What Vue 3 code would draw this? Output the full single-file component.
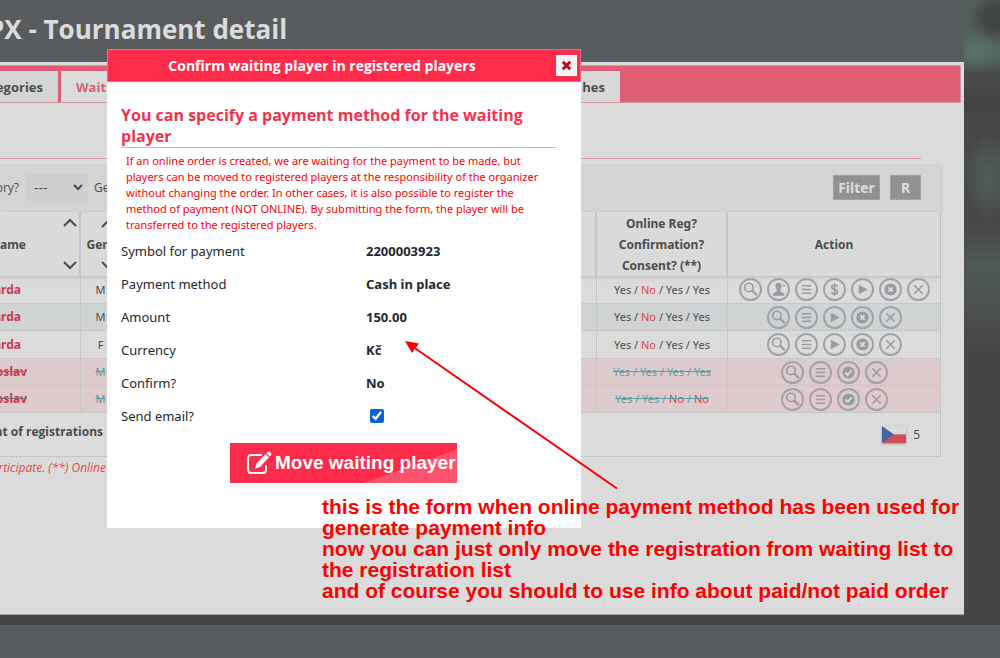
<script setup>
import { ref } from 'vue'

const sendEmail = ref(true)
const category = ref('---')

const full = ['search', 'person', 'list', 'dollar', 'play', 'cancel', 'close']
const short = ['search', 'list', 'play', 'cancel', 'close']
const waiting = ['search', 'list', 'check', 'close']

const rows = [
  { name: 'arda', gender: 'M', flags: ['Yes', 'No', 'Yes', 'Yes'], actions: full, kind: '' },
  { name: 'arda', gender: 'M', flags: ['Yes', 'No', 'Yes', 'Yes'], actions: short, kind: 'alt' },
  { name: 'arda', gender: 'F', flags: ['Yes', 'No', 'Yes', 'Yes'], actions: short, kind: '' },
  { name: 'oslav', gender: 'M', flags: ['Yes', 'Yes', 'Yes', 'Yes'], actions: waiting, kind: 'cancelled' },
  { name: 'oslav', gender: 'M', flags: ['Yes', 'Yes', 'No', 'No'], actions: waiting, kind: 'cancelled' },
]

const details = [
  ['Symbol for payment', '2200003923'],
  ['Payment method', 'Cash in place'],
  ['Amount', '150.00'],
  ['Currency', 'Kč'],
  ['Confirm?', 'No'],
]
</script>

<template>
  <div class="page">
    <header class="masthead"><h1>PX - Tournament detail</h1></header>

    <main class="panel">
      <nav class="tabs">
        <a class="tab first" href="#categories">egories</a>
        <a class="tab active" href="#waiting">Waiting</a>
        <a class="tab last" href="#matches">hes</a>
      </nav>

      <div class="content">
        <div class="rule"></div>
        <form class="filter" @submit.prevent>
          <label for="category">ory?</label>
          <span class="select">
            <select id="category" v-model="category"><option>---</option></select>
            <svg viewBox="0 0 10 7"><path d="M1 1l4 4 4-4" /></svg>
          </span>
          <span class="gender-label">Ge</span>
          <button class="filter-btn" type="submit">Filter</button>
          <button class="filter-btn reset" type="reset">R</button>
        </form>

        <table class="players">
          <colgroup>
            <col class="c-name"><col class="c-gender"><col><col class="c-online"><col class="c-action">
          </colgroup>
          <thead>
            <tr>
              <th class="name">
                <div class="sortable">
                  <span>ame</span>
                  <span class="sorts">
                    <svg viewBox="0 0 14 9"><path d="M1 8l6-6 6 6" /></svg>
                    <svg viewBox="0 0 14 9"><path d="M1 1l6 6 6-6" /></svg>
                  </span>
                </div>
              </th>
              <th class="gender">
                <div class="sortable">
                  <svg viewBox="0 0 14 9"><path d="M1 8l6-6 6 6" /></svg>
                  <span>Gen.</span>
                  <svg viewBox="0 0 14 9"><path d="M1 1l6 6 6-6" /></svg>
                </div>
              </th>
              <th></th>
              <th>Online Reg?<br>Confirmation?<br>Consent? (**)</th>
              <th>Action</th>
            </tr>
          </thead>
          <tbody>
            <tr v-for="(row, i) in rows" :key="i" :class="row.kind">
              <td class="name"><a href="#player">{{ row.name }}</a></td>
              <td class="gender"><span>{{ row.gender }}</span></td>
              <td></td>
              <td class="online">
                <span class="flags"><template v-for="(f, j) in row.flags" :key="j"><template v-if="j"> / </template><span :class="{ no: f === 'No' }">{{ f }}</span></template></span>
              </td>
              <td>
                <div class="actions">
                  <button v-for="a in row.actions" :key="a" class="round" type="button" :aria-label="a">
                    <svg viewBox="3 3 18 18">
                      <template v-if="a === 'search'">
                        <circle class="line" cx="10.5" cy="10" r="4" />
                        <path class="line thick" d="M13.5 13l4.500 4.500" />
                      </template>
                      <template v-else-if="a === 'person'">
                        <path class="solid" d="M12 5.500c2 0 3.200 1.400 3 3.300-.1 1.700-.9 2.500-1.300 3.200v2c1 .7 3.800 1 3.800 4H6.500c0-3 2.800-3.300 3.800-4v-2C9.900 11.300 9.100 10.500 9 8.800 8.800 6.900 10 5.500 12 5.500z" />
                        <circle class="solid" cx="17.200" cy="8.500" r="1" />
                      </template>
                      <path v-else-if="a === 'list'" class="line" d="M7.500 8.500h9M7.500 12h9M7.500 15.500h9" />
                      <path v-else-if="a === 'dollar'" class="line" d="M12 6v12M14.700 9.500c0-1.300-1.100-1.800-2.700-1.800s-2.700.7-2.700 2c0 3 5.400 1.500 5.400 4.600 0 1.400-1.100 2.100-2.700 2.100s-2.700-.7-2.700-2" />
                      <path v-else-if="a === 'play'" class="solid" d="M8.500 7.500l8.500 4.500-8.500 4.500z" />
                      <template v-else-if="a === 'cancel'">
                        <circle class="solid" cx="12" cy="12" r="5.800" />
                        <path class="cut" d="M10 10l4 4M14 10l-4 4" />
                      </template>
                      <template v-else-if="a === 'check'">
                        <circle class="solid" cx="12" cy="12" r="5.800" />
                        <path class="cut" d="M9 12l2.300 2.300 3.700-4.300" />
                      </template>
                      <path v-else class="line" d="M8 8l8 8M16 8l-8 8" />
                    </svg>
                  </button>
                </div>
              </td>
            </tr>
          </tbody>
          <tfoot>
            <tr>
              <td class="total" colspan="3"><strong>nt of registrations</strong></td>
              <td colspan="2">
                <div class="country">
                  <svg viewBox="0 0 24 17" role="img" aria-label="Czech Republic">
                    <path fill="#dedede" d="M0 0h24v8.500H0z" /><path fill="#d14f54" d="M0 8.500h24V17H0z" />
                    <path fill="#4861a2" d="M0 0l12 8.500L0 17z" />
                  </svg>
                  <span>5</span>
                </div>
              </td>
            </tr>
          </tfoot>
        </table>
        <p class="footnote">rticipate. (**) Online</p>
      </div>
    </main>
    <div class="shade"></div>
    <footer class="base"></footer>
    <div class="texture"></div>

    <section class="dialog" role="dialog" aria-labelledby="dialog-title">
      <header class="dialog-head">
        <h2 id="dialog-title">Confirm waiting player in registered players</h2>
        <button class="close" type="button" aria-label="Close">
          <svg viewBox="0 0 12 12"><path d="M2 2l8 8M10 2l-8 8" /></svg>
        </button>
      </header>
      <form class="dialog-body" @submit.prevent>
        <h3>You can specify a payment method for the waiting player</h3>
        <p class="notice">If an online order is created, we are waiting for the payment to be made, but players can be moved to registered players at the responsibility of the organizer without changing the order. In other cases, it is also possible to register the method of payment (NOT ONLINE). By submitting the form, the player will be transferred to the registered players.</p>
        <dl class="details">
          <div v-for="d in details" :key="d[0]" class="detail"><dt>{{ d[0] }}</dt><dd>{{ d[1] }}</dd></div>
        </dl>
        <div class="detail">
          <label for="send-email">Send email?</label>
          <input id="send-email" v-model="sendEmail" type="checkbox">
        </div>
        <button class="submit" type="submit">
          <svg viewBox="0 0 26 24">
            <path class="frame" d="M16 4H5.500C3.200 4 2 5.200 2 7.500v11C2 20.800 3.200 22 5.500 22h11c2.300 0 3.500-1.200 3.500-3.500V14" />
            <path class="pen" d="M9 17.500l1.500-5L19.500 3l3.500 3.300-9 9.700zM20.300 2.200L21.800.8c.5-.5 1.200-.5 1.800 0l1.400 1.400c.6.6.6 1.300 0 1.800l-1.300 1.500z" />
          </svg>
          <span>Move waiting player</span>
        </button>
      </form>
    </section>

    <svg class="arrow" viewBox="0 0 214 150">
      <path class="shaft" d="M9 6.500L212 147.500" /><path class="tip" d="M0 0l14 2.500-7 9.500z" />
    </svg>
    <p class="note">this is the form when online payment method has been used for<br>generate payment info<br>now you can just only move the registration from waiting list to<br>the registration list<br>and of course you should to use info about paid/not paid order</p>
  </div>
</template>

<style>
body { margin: 0; background: #575b5e; }
</style>

<style scoped>
.page {
  position: relative;
  display: grid;
  grid-template-columns: minmax(0, 1fr) 36px;
  grid-template-rows: 62px auto auto;
  min-height: 100vh;
  overflow: hidden;
  background: #575b5e;
  color: #4b4b4b;
  font: 12px/20px "Open Sans", sans-serif;
}
.page *, .page *::before { box-sizing: border-box; }
h1, h2, h3, p, dl, dd { margin: 0; }
a { color: inherit; text-decoration: none; }
button, select { font: inherit; color: inherit; border: 0; border-radius: 0; }
svg { display: block; fill: none; flex: none; }

.masthead { display: flex; align-items: center; overflow: hidden; padding-bottom: 4px; }
h1 { margin-left: -12px; font-size: 26px; line-height: 36px; font-weight: 700; color: #dedede; white-space: nowrap; }

.shade {
  grid-column: 2; grid-row: 1 / 3;
  background:
    radial-gradient(ellipse 30px 26px at 34px 18px, #414444 45%, transparent),
    radial-gradient(ellipse 32px 22px at 12px 50px, #5a7068, transparent),
    radial-gradient(ellipse 22px 44px at 24px 178px, #4e5d5a, transparent),
    linear-gradient(#505e5b 0, #50605b 58px, #474a4a 74px, #444343 105px, #474b4a 160px, #454645 225px, #4d5854 265px, #4b4f4d 310px, #444 350px);
}
.panel { grid-column: 1; grid-row: 2; background: #dedede; border-bottom: 1px solid #9da1a1; padding: 3px 3px 0 0; min-height: 553px; }
.base { grid-column: 1 / 3; border-top: 10px solid #444; min-height: 43px; }
.texture {
  position: absolute; inset: 0; pointer-events: none;
  background:
    repeating-linear-gradient(90deg, rgba(0,0,0,.01) 0 1px, rgba(255,255,255,.01) 1px 2px),
    repeating-linear-gradient(rgba(0,0,0,.01) 0 1px, rgba(255,255,255,.01) 1px 2px);
}

.tabs { display: flex; align-items: stretch; height: 38px; padding-top: 5px; background: #e05d71; border: 1px solid #d9959d; border-left: 0; }
.tab { display: flex; align-items: center; font-size: 13px; font-weight: 700; background: #dadada; white-space: nowrap; overflow: hidden; }
.tab.first { width: 58px; justify-content: flex-end; padding-right: 15px; background: #d5d6d8; }
.tab.active { margin-left: 3px; width: 120px; padding-left: 15px; color: #e05d71; background: #dedede; }
.tab.last { width: 439px; justify-content: flex-end; padding-right: 15px; }

.content { padding-right: 20px; }
.rule { height: 56px; margin-right: 20px; border-bottom: 1px solid #dc9ba3; }
.filter { display: flex; align-items: center; height: 47px; margin-top: 5px; padding-right: 20px; background: #d6d6d6; box-shadow: 1px 1px 2px #c9c9c9; font-size: 12px; }
.filter label { width: 26px; display: flex; justify-content: flex-end; padding-right: 7px; overflow: hidden; }
.select { display: flex; position: relative; width: 62px; height: 27px; }
.select select { appearance: none; width: 100%; padding: 0 8px; background: #cfd0d2; font-size: 14px; }
.select svg { position: absolute; right: 5px; top: 10px; width: 10px; height: 7px; stroke: #4b4b4b; stroke-width: 2; }
.gender-label { margin: 0 auto 0 6px; }
.filter-btn { height: 25px; width: 47px; padding: 0; border: 1px solid #a2a2a2; background: #929292; color: #dedede; font-size: 14px; font-weight: 700; font-family: "Noto Sans", sans-serif; }
.reset { width: 31px; margin-left: 10px; }

.players { width: 100%; margin-top: 1px; table-layout: fixed; border-collapse: separate; border-spacing: 0; border-right: 1px solid #c4c4c4; font-family: "Noto Sans", sans-serif; }
.c-name { width: 81px; } .c-gender { width: 40px; } .c-online { width: 131px; } .c-action { width: 212px; }
th { height: 64px; padding: 0; font-size: 12px; line-height: 21px; border-right: 2px solid #c9c6ca; background: #dddddd; box-shadow: 0 2px 3px #c9c2c8; }
th:last-child { border-right: 0; }
th svg { width: 14px; height: 9px; stroke: #4b4b4b; stroke-width: 2; }
.name .sortable { display: flex; align-items: center; justify-content: flex-end; gap: 37px; }
.sorts { display: flex; flex-direction: column; gap: 34px; padding-right: 2px; }
.gender .sortable { display: flex; flex-direction: column; align-items: center; gap: 6px; }
.gender svg { align-self: flex-end; margin-right: 4px; }
td { height: 27px; padding: 0; border-bottom: 1px solid #c9c9c9; border-right: 1px solid #c9c9c9; line-height: 20px; }
td:last-child { border-right: 0; }
tbody tr:nth-child(odd):not(.cancelled) td { height: 28px; }
.alt td { background: #d0d5d6; }
.cancelled td { background: #e1cccf; }
td.name { font-weight: 700; color: #d0364e; }
td.name a { display: flex; justify-content: flex-end; width: 21px; overflow: hidden; }
.cancelled td.name a { width: 27px; text-decoration: line-through; text-decoration-color: #7b747d; }
td.gender { text-align: center; font-size: 11px; }
.online { text-align: center; font-size: 11px; }
.no { color: #e84040; }
.cancelled .gender span, .cancelled .flags { color: #57a2a5; text-decoration: line-through; }
.actions { display: flex; justify-content: center; gap: 5px; }
.round { width: 23px; height: 23px; padding: 0; border: 2px solid #a1a4a9; border-radius: 50%; background: transparent; }
.round svg { width: 19px; height: 19px; }
.line { stroke: #999ca2; stroke-width: 1.5; }
.thick { stroke-width: 2; }
.solid { fill: #999ca2; }
.cut { stroke: #dedede; stroke-width: 1.8; }
tfoot td { height: 44px; }
tfoot td:first-child { border-right: 0; }
.total { padding-bottom: 6px; font-family: "Open Sans", sans-serif; }
.total strong { display: flex; width: 103px; justify-content: flex-end; overflow: hidden; white-space: nowrap; }
.country { display: flex; align-items: center; justify-content: flex-end; gap: 7px; padding-right: 20px; }
.country svg { width: 24px; height: 17px; filter: drop-shadow(0 1px 1px #999); }
.footnote { display: flex; justify-content: flex-end; width: 106px; margin-top: 1px; overflow: hidden; font-size: 12px; font-style: italic; color: #e84343; white-space: nowrap; }

.dialog { position: absolute; left: 107px; top: 49px; width: 474px; min-height: 479px; background: #fff; color: #24282e; }
.dialog-head { display: flex; align-items: center; height: 33px; padding: 0 3px 0 0; background: #ff2b4b; border: 1px solid #d97583; }
h2 { flex: 1; padding-right: 20px; text-align: center; font-size: 14px; line-height: 20px; font-weight: 700; color: #fff; }
.close { width: 21px; height: 21px; padding: 4px; background: #f3f3f3; border: 1px solid #fff; }
.close svg { width: 11px; height: 11px; stroke: #c00010; stroke-width: 3; }
.dialog-body { padding: 23px 25px 0 14px; font: 13px/20px "Noto Sans", sans-serif; }
h3 { font: 700 16px/21px "Open Sans", sans-serif; color: #f5314f; border-bottom: 1px solid #f5a5b1; }
.notice { margin: 5px 5px 1px; font-size: 11px; line-height: 16px; color: #f00; }
.detail { display: grid; grid-template-columns: 245px 1fr; align-items: center; height: 33px; }
dd { font-weight: 700; }
.detail input { width: 14px; height: 14px; margin: 0 4px; accent-color: #0563dc; }
.submit { display: flex; align-items: center; gap: 3px; width: 227px; height: 40px; margin: 11px auto 0 109px; padding: 0 0 0 16px; background: linear-gradient(160deg, transparent 72%, #ff536d 73%), #ff2b4b; color: #fff; font: 700 19px/24px "Liberation Sans", sans-serif; white-space: nowrap; }
.submit svg { width: 26px; height: 24px; }
.frame { stroke: #fff; stroke-width: 2; }
.pen { fill: #fff; }
.arrow { position: absolute; left: 405px; top: 341px; width: 214px; height: 150px; }
.shaft { stroke: #f00; stroke-width: 2; }
.tip { fill: #f00; }
.note { position: absolute; left: 322px; top: 496px; font: 700 21px/21px "Liberation Sans", sans-serif; color: #f00; white-space: nowrap; }
</style>
